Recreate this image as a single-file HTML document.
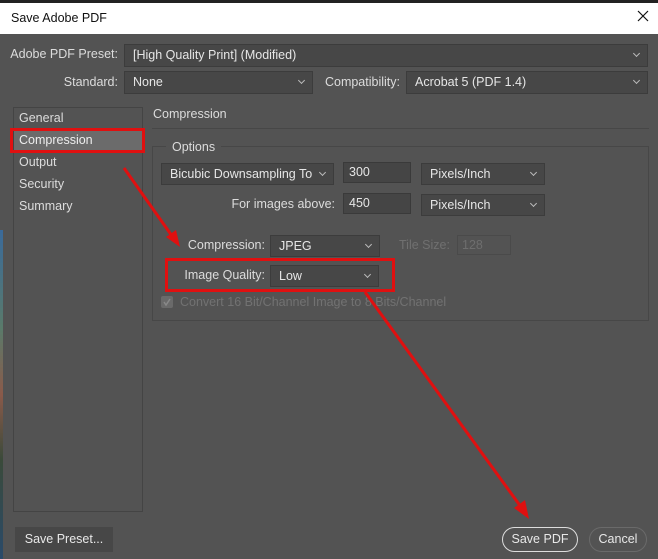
<!DOCTYPE html>
<html><head><style>
*{box-sizing:border-box;margin:0;padding:0}
body{width:658px;height:559px;overflow:hidden;background:#535353;font-family:"Liberation Sans",sans-serif;font-size:12.5px;color:#dcdcdc;position:relative}
.a{position:absolute}
.dd{position:absolute;background:#474747;border:1px solid #3c3c3c;padding-left:8px;line-height:20px;color:#e6e6e6}
.dd:after{content:"";position:absolute;right:8px;top:6px;width:4px;height:4px;border-right:1px solid #bbb;border-bottom:1px solid #bbb;transform:rotate(45deg)}
.in{position:absolute;background:#454545;border:1px solid #3a3a3a;padding-left:5px;line-height:19px;color:#e6e6e6}
.lbl{position:absolute;text-align:right;line-height:20px}
.btn{position:absolute;line-height:24px;text-align:center;color:#e8e8e8}
</style></head><body>
<div class="a" style="left:0;top:0;width:658px;height:3px;background:#222"></div>
<div class="a" style="left:0;top:3px;width:658px;height:31px;background:#fff;color:#111;font-size:12.5px;line-height:30px;padding-left:11px">Save Adobe PDF</div>
<svg class="a" style="left:637px;top:10px" width="12" height="12"><path d="M1 1L11 11M11 1L1 11" stroke="#111" stroke-width="1.2"/></svg>
<div class="a" style="left:0;top:230px;width:3px;height:329px;background:linear-gradient(#3a6a9a,#5a7a6a 30%,#8a5a4a 50%,#3a4a3a 70%,#2a4a6a)"></div>

<div class="lbl" style="left:0;width:118px;top:44px">Adobe PDF Preset:</div>
<div class="dd" style="left:124px;top:44px;width:524px;height:23px;line-height:21px">[High Quality Print] (Modified)</div>
<div class="lbl" style="left:0;width:118px;top:72px">Standard:</div>
<div class="dd" style="left:124px;top:71px;width:189px;height:23px;line-height:21px">None</div>
<div class="lbl" style="left:318px;width:82px;top:72px">Compatibility:</div>
<div class="dd" style="left:406px;top:71px;width:242px;height:23px;line-height:21px">Acrobat 5 (PDF 1.4)</div>

<div class="a" style="left:13px;top:107px;width:130px;height:405px;border:1px solid #444;background:#535353"></div>
<div class="a" style="left:14px;top:129px;width:128px;height:22px;background:#6b6b6b"></div>
<div class="a" style="left:19px;top:110px;line-height:16px">General</div>
<div class="a" style="left:19px;top:132px;line-height:16px;color:#eee">Compression</div>
<div class="a" style="left:19px;top:154px;line-height:16px">Output</div>
<div class="a" style="left:19px;top:176px;line-height:16px">Security</div>
<div class="a" style="left:19px;top:198px;line-height:16px">Summary</div>
<div class="a" style="left:10px;top:128px;width:135px;height:25px;border:3px solid #e01010"></div>

<div class="a" style="left:153px;top:106px;line-height:16px">Compression</div>
<div class="a" style="left:152px;top:128px;width:497px;height:1px;background:#474747"></div>
<div class="a" style="left:152px;top:146px;width:497px;height:175px;border:1px solid #474747"></div>
<div class="a" style="left:166px;top:139px;padding:0 6px;background:#535353;line-height:16px">Options</div>

<div class="dd" style="left:161px;top:163px;width:173px;height:22px">Bicubic Downsampling To</div>
<div class="in" style="left:343px;top:162px;width:68px;height:21px">300</div>
<div class="dd" style="left:421px;top:163px;width:124px;height:22px">Pixels/Inch</div>
<div class="lbl" style="left:160px;width:175px;top:194px">For images above:</div>
<div class="in" style="left:343px;top:193px;width:68px;height:21px">450</div>
<div class="dd" style="left:421px;top:194px;width:124px;height:22px">Pixels/Inch</div>

<div class="lbl" style="left:160px;width:105px;top:235px">Compression:</div>
<div class="dd" style="left:270px;top:235px;width:110px;height:22px">JPEG</div>
<div class="a" style="left:399px;top:235px;line-height:20px;color:#707070">Tile Size:</div>
<div class="a" style="left:457px;top:235px;width:54px;height:20px;border:1px solid #4a4a4a;color:#6e6e6e;line-height:18px;padding-left:4px">128</div>
<div class="lbl" style="left:160px;width:105px;top:265px">Image Quality:</div>
<div class="dd" style="left:270px;top:265px;width:109px;height:22px">Low</div>
<div class="a" style="left:165px;top:258px;width:230px;height:34px;border:3px solid #e01010"></div>
<div class="a" style="left:161px;top:296px;width:12px;height:12px;background:#6a6a6a;border-radius:2px"></div>
<svg class="a" style="left:161px;top:296px" width="12" height="12"><path d="M3 6L5 9L9 3" stroke="#888" stroke-width="1.5" fill="none"/></svg>
<div class="a" style="left:180px;top:294px;line-height:16px;color:#727272">Convert 16 Bit/Channel Image to 8 Bits/Channel</div>

<svg class="a" style="left:0;top:0" width="658" height="559">
<path d="M124 168L172 236" stroke="#e01010" stroke-width="3"/>
<path d="M180 247L166 237L176 230Z" fill="#e01010"/>
<path d="M365 292L521 507" stroke="#e01010" stroke-width="3"/>
<path d="M529 519L514 508L525 500Z" fill="#e01010"/>
</svg>

<div class="btn" style="left:15px;top:527px;width:98px;height:25px;background:#474747">Save Preset...</div>
<div class="btn" style="left:502px;top:527px;width:76px;height:25px;border:1.5px solid #ddd;border-radius:13px;line-height:22px">Save PDF</div>
<div class="btn" style="left:589px;top:527px;width:58px;height:25px;border:1.5px solid #6a6a6a;border-radius:13px;line-height:22px">Cancel</div>
</body></html>
